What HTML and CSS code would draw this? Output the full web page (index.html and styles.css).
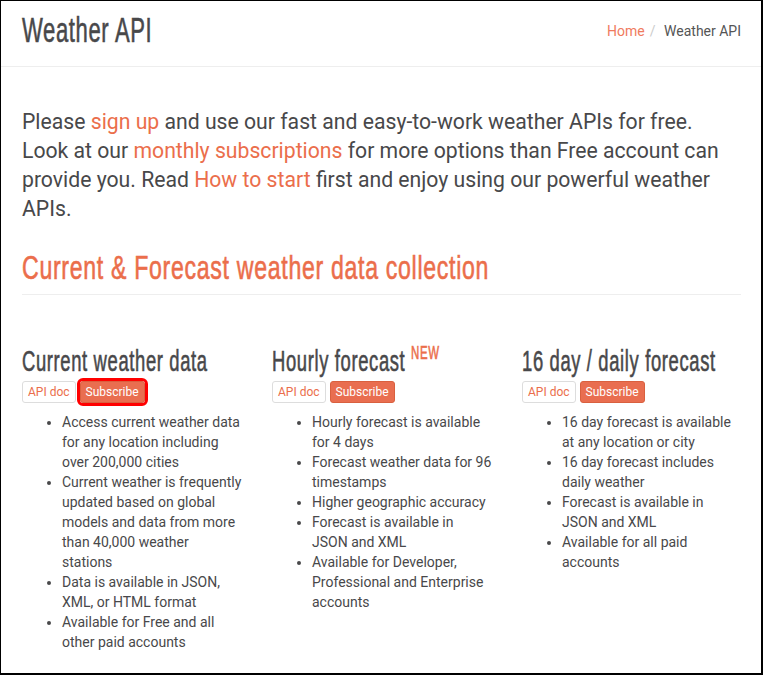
FILE: index.html
```html
<!DOCTYPE html>
<html lang="en">
<head>
<meta charset="utf-8">
<title>Weather API</title>
<link rel="stylesheet" href="styles.css">
</head>
<body>
<div class="frame">
  <header class="topbar">
    <h1 class="title"><span class="narrow narrow-h1">Weather API</span></h1>
    <ol class="crumbs">
      <li><a href="#">Home</a></li>
      <li class="current">Weather API</li>
    </ol>
  </header>
  <main class="content">
    <p class="lead">Please <a href="#">sign up</a> and use our fast and easy-to-work weather APIs for free. Look at our <a href="#">monthly subscriptions</a> for more options than Free account can provide you. Read <a href="#">How to start</a> first and enjoy using our powerful weather APIs.</p>
    <h2 class="section-title"><span class="narrow narrow-h2">Current &amp; Forecast weather data collection</span></h2>
    <div class="cols">
      <section class="col">
        <h3 class="col-title"><span class="narrow narrow-h3">Current weather data</span></h3>
        <div class="btns"><a class="btn btn-line" href="#">API doc</a><a class="btn btn-fill is-focused" href="#">Subscribe</a></div>
        <ul class="feats">
          <li>Access current weather data for any location including over 200,000 cities</li>
          <li>Current weather is frequently updated based on global models and data from more than 40,000 weather stations</li>
          <li>Data is available in JSON, XML, or HTML format</li>
          <li>Available for Free and all other paid accounts</li>
        </ul>
      </section>
      <section class="col">
        <h3 class="col-title"><span class="narrow narrow-h3">Hourly forecast <sup class="new">NEW</sup></span></h3>
        <div class="btns"><a class="btn btn-line" href="#">API doc</a><a class="btn btn-fill" href="#">Subscribe</a></div>
        <ul class="feats">
          <li>Hourly forecast is available for 4 days</li>
          <li>Forecast weather data for 96 timestamps</li>
          <li>Higher geographic accuracy</li>
          <li>Forecast is available in JSON and XML</li>
          <li>Available for Developer, Professional and Enterprise accounts</li>
        </ul>
      </section>
      <section class="col">
        <h3 class="col-title"><span class="narrow narrow-h3">16 day / daily forecast</span></h3>
        <div class="btns"><a class="btn btn-line" href="#">API doc</a><a class="btn btn-fill" href="#">Subscribe</a></div>
        <ul class="feats">
          <li>16 day forecast is available at any location or city</li>
          <li>16 day forecast includes daily weather</li>
          <li>Forecast is available in JSON and XML</li>
          <li>Available for all paid accounts</li>
        </ul>
      </section>
    </div>
  </main>
</div>
</body>
</html>
```

FILE: styles.css
```css
html, body {
  margin: 0;
  padding: 0;
  background: #fff;
}
body {
  font-family: Roboto, "Liberation Sans", Arial, sans-serif;
  color: #48484a;
}
a {
  color: #eb6e4b;
  text-decoration: none;
}
.frame {
  box-sizing: border-box;
  width: 763px;
  height: 675px;
  border: 1px solid #000;
  border-right-width: 2px;
  border-bottom-width: 2px;
  overflow: hidden;
}
.topbar {
  display: flex;
  align-items: center;
  justify-content: space-between;
  height: 59px;
  padding: 0 20px 6px 21px;
  border-bottom: 1px solid #eee;
}
.narrow {
  display: inline-block;
  font-family: "Liberation Sans", Arial, sans-serif;
  font-weight: 400;
  letter-spacing: 1px;
  transform-origin: 0 50%;
  white-space: nowrap;
  -webkit-text-stroke: 0.6px currentColor;
}
.narrow-h1 { transform: scaleX(0.63); }
.narrow-h2 { transform: scaleX(0.69); }
.narrow-h3 { transform: scaleX(0.635); }
.title {
  margin: 0;
  font-weight: 400;
  font-size: 35px;
  line-height: 40px;
  color: #48484a;
}
.crumbs {
  list-style: none;
  margin: 0;
  padding: 0;
  display: flex;
  font-size: 14px;
  line-height: 20px;
}
.crumbs li + li::before {
  content: "/\00a0";
  color: #ccc;
  padding: 0 5px;
}
.crumbs a {
  color: #f07b5e;
}
.crumbs .current {
  color: #555;
}
.content {
  padding: 0 20px 0 21px;
}
.lead {
  margin: 40px 0 0;
  font-size: 21.2px;
  line-height: 29px;
}
.section-title {
  margin: 26px 0 0;
  padding-bottom: 7px;
  border-bottom: 1px solid #eee;
  font-weight: 400;
  font-size: 33.5px;
  line-height: 38px;
  color: #eb6e4b;
}
.cols {
  display: grid;
  grid-template-columns: repeat(3, 219.5px);
  column-gap: 30.5px;
  margin-top: 50px;
}
.col-title {
  margin: 0;
  font-weight: 400;
  font-size: 29px;
  line-height: 32px;
  color: #48484a;
}
.new {
  font-size: 18px;
  color: #eb6e4b;
  vertical-align: 12px;
  line-height: 0;
}
.btns {
  margin-top: 4px;
  display: flex;
  gap: 4px;
}
.btn {
  display: inline-block;
  font-size: 12px;
  line-height: 18px;
  padding: 1px 5px;
  border: 1px solid #ddd;
  border-radius: 3px;
}
.btn-line {
  background: #fff;
  color: #eb6e4b;
}
.btn-fill {
  background: #e96e50;
  border-color: #d9603f;
  color: #fff;
}
.is-focused {
  outline: 3px solid #f00;
  outline-offset: 0;
}
.feats {
  margin: 9px 0 0;
  padding-left: 40px;
  font-size: 14px;
  line-height: 20px;
}
```
